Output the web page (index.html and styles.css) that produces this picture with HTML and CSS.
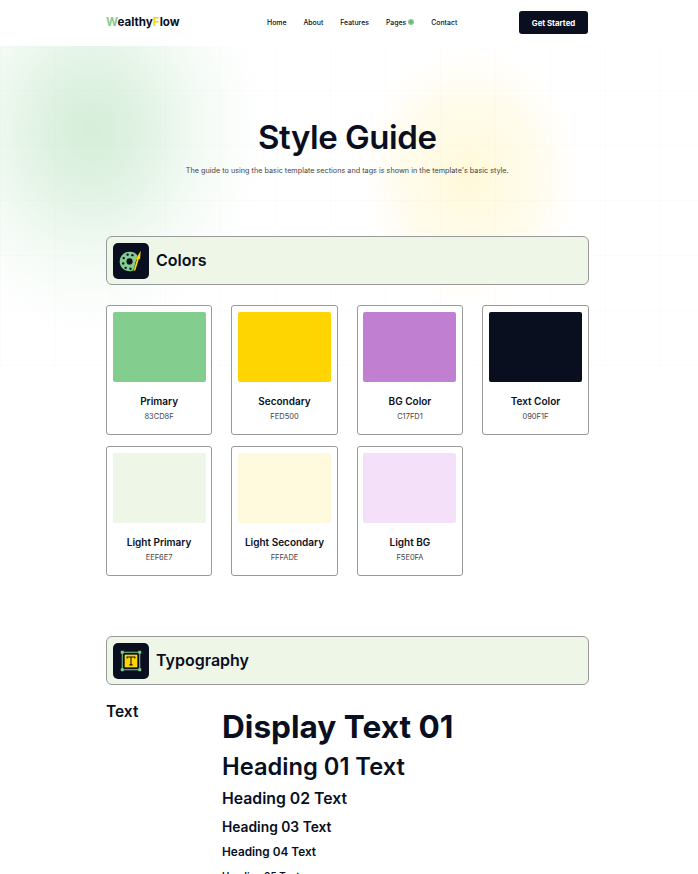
FILE: index.html
```html
<!DOCTYPE html>
<html lang="en">
<head>
    <meta charset="UTF-8">
    <meta name="viewport" content="width=device-width, initial-scale=1.0">
    <title>Style Guide</title>
    <link rel="stylesheet" href="styles.css">
</head>
<body>
    <div class="page">
        <header class="navbar">
            <a class="logo"><span class="logo-w">W</span>ealthy<span class="logo-f">F</span>low</a>
            <nav class="nav-links">
                <a>Home</a>
                <a>About</a>
                <a>Features</a>
                <a class="nav-pages">Pages
                    <svg class="nav-dot" viewBox="0 0 6 6"><circle cx="3" cy="3" r="3" fill="#83CD8F"/><path d="M3 1.5v3M1.5 3h3" stroke="#4d9a5a" stroke-width=".7"/></svg>
                </a>
                <a>Contact</a>
            </nav>
            <a class="nav-btn">Get Started</a>
        </header>

        <main class="main">
            <section class="hero">
                <h1>Style Guide</h1>
                <p>The guide to using the basic template sections and tags is shown in the template's basic style.</p>
            </section>

            <section class="section-colors">
                <div class="section-head">
                    <span class="head-icon">
                        <svg viewBox="0 0 37 37">
                            <path d="M17 9a10 10 0 1 0 3 19.5c1-.4 1.2-1.5 1.8-3L25 12.5A10 10 0 0 0 17 9z" fill="#83CD8F"/>
                            <circle cx="17" cy="19" r="3.2" fill="#090F1F"/>
                            <g fill="#090F1F">
                                <circle cx="10.5" cy="21" r="1.2"/>
                                <circle cx="11" cy="15.5" r="1.2"/>
                                <circle cx="15" cy="12" r="1.2"/>
                                <circle cx="20" cy="12.5" r="1.2"/>
                                <circle cx="13" cy="25.5" r="1.2"/>
                                <circle cx="18" cy="26.5" r="1.2"/>
                            </g>
                            <path d="M21 29 24.5 17l-1.2-.4L28.5 8l-.7 8.7-1.2-.3L23 28z" fill="#FED500"/>
                        </svg>
                    </span>
                    <h2>Colors</h2>
                </div>
                <div class="color-grid">
                    <div class="color-card"><div class="swatch primary"></div><h4>Primary</h4><p>83CD8F</p></div>
                    <div class="color-card"><div class="swatch secondary"></div><h4>Secondary</h4><p>FED500</p></div>
                    <div class="color-card"><div class="swatch bg-color"></div><h4>BG Color</h4><p>C17FD1</p></div>
                    <div class="color-card"><div class="swatch text-color"></div><h4>Text Color</h4><p>090F1F</p></div>
                    <div class="color-card"><div class="swatch light-primary"></div><h4>Light Primary</h4><p>EEF6E7</p></div>
                    <div class="color-card"><div class="swatch light-secondary"></div><h4>Light Secondary</h4><p>FFFADE</p></div>
                    <div class="color-card"><div class="swatch light-bg"></div><h4>Light BG</h4><p>F5E0FA</p></div>
                </div>
            </section>

            <section class="section-type">
                <div class="section-head">
                    <span class="head-icon">
                        <svg viewBox="0 0 37 37">
                            <rect x="9.5" y="9.5" width="18" height="18" fill="none" stroke="#83CD8F" stroke-width="1"/>
                            <rect x="12" y="12" width="13" height="13" fill="#FED500"/>
                            <g fill="#83CD8F">
                                <rect x="8" y="8" width="3" height="3"/>
                                <rect x="26" y="8" width="3" height="3"/>
                                <rect x="8" y="26" width="3" height="3"/>
                                <rect x="26" y="26" width="3" height="3"/>
                            </g>
                            <path d="M14.5 16v-1.7h8V16M18.5 14.3v8M16.8 22.5h3.4" fill="none" stroke="#090F1F" stroke-width="1.1"/>
                        </svg>
                    </span>
                    <h2>Typography</h2>
                </div>
                <div class="type-row">
                    <h3 class="type-label">Text</h3>
                    <div class="type-list">
                        <div class="display-01">Display Text 01</div>
                        <div class="heading-01">Heading 01 Text</div>
                        <div class="heading-02">Heading 02 Text</div>
                        <div class="heading-03">Heading 03 Text</div>
                        <div class="heading-04">Heading 04 Text</div>
                        <div class="heading-05">Heading 05 Text</div>
                    </div>
                </div>
            </section>
        </main>
    </div>
</body>
</html>
```

FILE: styles.css
```css
* { box-sizing: border-box; }
body { margin: 0; font-family: Inter, "Liberation Sans", sans-serif; color: #090F1F; background: white; }
h1, h2, h3, h4, p { margin: 0; }
.page { height: 100vh; overflow: hidden; }

.navbar { height: 46px; padding: 0 110px 1px 106px; display: flex; align-items: center; background: white; }
.logo { font-size: 11.6px; font-weight: 700; width: 75px; margin-top: -1px; }
.logo-w { color: #83CD8F; }
.logo-f { color: #FED500; }
.nav-links { margin-left: 86px; margin-top: -1px; display: flex; align-items: center; gap: 17px; font-size: 6.9px; font-weight: 500; }
.nav-pages { display: flex; align-items: center; gap: 2px; }
.nav-dot { width: 6px; height: 6px; }
.nav-btn { margin-left: auto; width: 69px; height: 23px; display: flex; align-items: center; justify-content: center; background: #090F1F; color: white; border-radius: 3px; font-size: 7.8px; font-weight: 700; }

.main {
    padding: 0 109.5px 0 106px;
    background-image:
        radial-gradient(ellipse 180px 210px at 90px 84px, rgba(131, 205, 143, 0.34), rgba(131, 205, 143, 0.24) 30%, rgba(131, 205, 143, 0.1) 60%, rgba(131, 205, 143, 0.03) 82%, transparent 100%),
        radial-gradient(ellipse 115px 135px at 470px 130px, rgba(254, 213, 0, 0.15), rgba(254, 213, 0, 0.08) 55%, rgba(254, 213, 0, 0.02) 85%, transparent 100%),
        repeating-linear-gradient(90deg, rgba(9, 15, 31, 0.012) 0 1px, transparent 1px 55px),
        repeating-linear-gradient(0deg, rgba(9, 15, 31, 0.012) 0 1px, transparent 1px 55px);
    background-size: 698px 320px;
    background-repeat: no-repeat;
}

.hero { padding-top: 71px; height: 190px; text-align: center; }
.hero h1 { font-size: 33px; line-height: 40px; font-weight: 600; letter-spacing: -0.45px; }
.hero p { margin-top: 8px; font-size: 7.25px; line-height: 12px; color: #444; }

.section-head { height: 49px; padding: 0 5.5px; display: flex; align-items: center; gap: 7.5px; background: #EEF6E7; border: 1px solid #999; border-radius: 6px; }
.head-icon { width: 36px; height: 36px; background: #090F1F; border-radius: 5px; display: block; flex: none; }
.head-icon svg { display: block; width: 100%; height: 100%; }
.section-head h2 { font-size: 16px; font-weight: 600; margin-top: -2px; }

.color-grid { margin-top: 20px; display: grid; grid-template-columns: repeat(4, 1fr); gap: 11px 19.3px; }
.color-card { height: 130px; padding: 6px 5.6px 5px; text-align: center; background: white; border: 1px solid #999; border-radius: 3px; }
.swatch { height: 70px; border-radius: 2px; }
.primary { background: #83CD8F; }
.secondary { background: #FED500; }
.bg-color { background: #C17FD1; }
.text-color { background: #090F1F; }
.light-primary { background: #EEF6E7; }
.light-secondary { background: #FFFADE; }
.light-bg { background: #F5E0FA; }
.color-card h4 { margin-top: 12px; font-size: 10px; line-height: 14px; font-weight: 600; }
.color-card p { margin-top: 3px; font-size: 7.5px; line-height: 12px; color: #444; }

.section-type { margin-top: 60px; }
.type-row { margin-top: 17px; display: flex; }
.type-label { width: 116px; font-size: 15.5px; line-height: 20px; font-weight: 600; }
.type-list { font-weight: 600; }
.display-01 { margin-top: 3px; font-size: 31.6px; line-height: 44px; font-weight: 700; }
.heading-01 { margin-top: 2px; font-size: 23.7px; line-height: 32px; }
.heading-02 { margin-top: 4px; font-size: 15.8px; line-height: 24px; }
.heading-03 { margin-top: 5px; font-size: 13.8px; line-height: 22px; }
.heading-04 { margin-top: 4px; font-size: 11.8px; line-height: 20px; }
.heading-05 { margin-top: 7px; font-size: 9.8px; line-height: 16px; }
```
